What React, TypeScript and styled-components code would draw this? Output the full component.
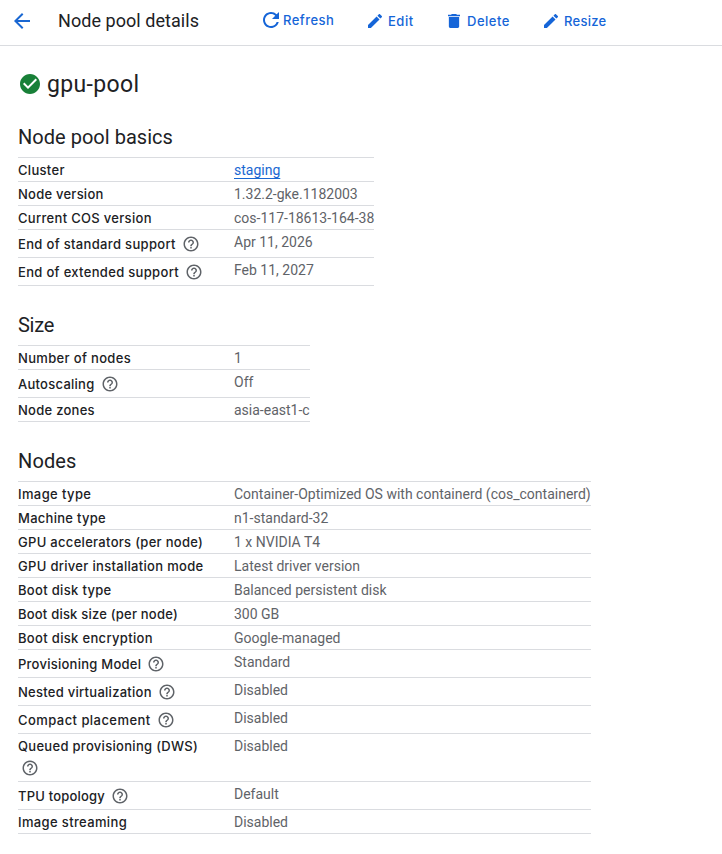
import React from 'react';
import styled, { createGlobalStyle } from 'styled-components';

const GlobalStyle = createGlobalStyle`
  body {
    margin: 0;
    background: #fff;
    color: #202124;
    font-family: Roboto, sans-serif;
  }
`;

const Page = styled.div`
  width: 722px;
  height: 854px;
  overflow: hidden;
  background: #fff;
`;

const Header = styled.header`
  display: flex;
  align-items: center;
  box-sizing: border-box;
  height: 46px;
  padding: 0 0 4px 10px;
  border-bottom: 1px solid #dadce0;
`;

const Icon = styled.svg<{ $w: number; $h?: number }>`
  display: block;
  flex: none;
  width: ${(p) => p.$w}px;
  height: ${(p) => p.$h ?? p.$w}px;
  fill: currentColor;
`;

const BackButton = styled.a`
  display: flex;
  margin-right: 24px;
  color: #1967d2;
`;

const Title = styled.h1`
  flex: none;
  width: 201px;
  margin: 0;
  font-size: 18px;
  font-weight: 400;
  line-height: 24px;
  letter-spacing: 0.05px;
  white-space: nowrap;
`;

const Action = styled.a<{ $width: number; $gap: number; $spacing: number; $raise?: boolean }>`
  display: flex;
  flex: none;
  align-items: center;
  gap: ${(p) => p.$gap}px;
  width: ${(p) => p.$width}px;
  padding-bottom: ${(p) => (p.$raise ? 2 : 0)}px;
  color: #1565d8;
  font: 500 13px/20px Inter, sans-serif;
  letter-spacing: ${(p) => p.$spacing}px;
`;

const ActionText = styled.span`
  padding-top: 1px;
`;

const Content = styled.main`
  padding: 24px 18px 0;
`;

const PoolName = styled.h2`
  display: flex;
  align-items: center;
  gap: 5px;
  height: 28px;
  margin: 0 0 28px;
  color: #188038;
`;

const PoolText = styled.span`
  padding-top: 1px;
  color: #202124;
  font-size: 23px;
  font-weight: 400;
  line-height: 28px;
  letter-spacing: 0.35px;
`;

const Section = styled.section`
  margin-bottom: 28px;
`;

const SectionTitle = styled.h3<{ $spacing: number }>`
  height: 31px;
  margin: 0;
  font-size: 20px;
  font-weight: 400;
  line-height: 22px;
  letter-spacing: ${(p) => p.$spacing}px;
`;

const Table = styled.dl<{ $width: number }>`
  width: ${(p) => p.$width}px;
  margin: 0;
  border-top: 1px solid #dadce0;
`;

const Row = styled.div<{ $height: number }>`
  display: grid;
  grid-template-columns: 190px 1fr;
  column-gap: 26px;
  box-sizing: border-box;
  height: ${(p) => p.$height}px;
  border-bottom: 1px solid #dadce0;
`;

const Label = styled.dt<{ $help?: boolean; $wrapped?: boolean }>`
  display: flex;
  flex-direction: ${(p) => (p.$wrapped ? 'column' : 'row')};
  align-items: ${(p) => (p.$wrapped ? 'flex-start' : 'center')};
  align-self: start;
  row-gap: 1px;
  column-gap: 3px;
  padding-top: ${(p) => (p.$help && !p.$wrapped ? 3 : 2)}px;
`;

const LabelText = styled.span<{ $spacing: number }>`
  font: 500 13px/20px Inter, sans-serif;
  letter-spacing: ${(p) => p.$spacing + 0.04}px;
  white-space: nowrap;
`;

const Help = styled.span`
  display: flex;
  flex: none;
  align-items: center;
  height: 22px;
  margin-left: 3px;
  color: #5f6368;
`;

const Value = styled.dd`
  margin: 0;
  padding-top: 2px;
  color: #5f6368;
  font-size: 14px;
  line-height: 20px;
  white-space: nowrap;
`;

const Link = styled.a`
  color: #1967d2;
  text-decoration: underline;
  text-underline-offset: 3px;
  text-decoration-skip-ink: none;
`;

const PENCIL =
  'M3 17.25V21h3.75L17.81 9.94l-3.75-3.75L3 17.25zM20.71 7.04a1 1 0 0 0 0-1.41l-2.34-2.34a1 1 0 0 0-1.41 0l-1.83 1.83 3.75 3.75 1.83-1.83z';

const HelpIcon = () => (
  <Icon $w={18} viewBox="0 0 24 24">
    <path d="M11 18h2v-2h-2v2zm1-16C6.48 2 2 6.48 2 12s4.48 10 10 10 10-4.48 10-10S17.52 2 12 2zm0 18c-4.41 0-8-3.59-8-8s3.59-8 8-8 8 3.59 8 8-3.59 8-8 8zm0-14c-2.21 0-4 1.79-4 4h2c0-1.1.9-2 2-2s2 .9 2 2c0 2-3 1.75-3 5h2c0-2.25 3-2.5 3-5 0-2.21-1.79-4-4-4z" />
  </Icon>
);

type Item = {
  label: string;
  value: string;
  spacing: number;
  help?: boolean;
  wrapped?: boolean;
  link?: boolean;
};

type Group = { title: string; spacing: number; width: number; items: Item[] };

const groups: Group[] = [
  {
    title: 'Node pool basics',
    spacing: 0.03,
    width: 356,
    items: [
      { label: 'Cluster', value: 'staging', spacing: 0.27, link: true },
      { label: 'Node version', value: '1.32.2-gke.1182003', spacing: 0.2 },
      { label: 'Current COS version', value: 'cos-117-18613-164-38', spacing: 0.27 },
      { label: 'End of standard support', value: 'Apr 11, 2026', spacing: 0.29, help: true },
      { label: 'End of extended support', value: 'Feb 11, 2027', spacing: 0.28, help: true },
    ],
  },
  {
    title: 'Size',
    spacing: -0.28,
    width: 292,
    items: [
      { label: 'Number of nodes', value: '1', spacing: 0.3 },
      { label: 'Autoscaling', value: 'Off', spacing: 0.22, help: true },
      { label: 'Node zones', value: 'asia-east1-c', spacing: 0.23 },
    ],
  },
  {
    title: 'Nodes',
    spacing: 0.12,
    width: 573,
    items: [
      { label: 'Image type', value: 'Container-Optimized OS with containerd (cos_containerd)', spacing: 0.35 },
      { label: 'Machine type', value: 'n1-standard-32', spacing: 0.24 },
      { label: 'GPU accelerators (per node)', value: '1 x NVIDIA T4', spacing: 0.26 },
      { label: 'GPU driver installation mode', value: 'Latest driver version', spacing: 0.27 },
      { label: 'Boot disk type', value: 'Balanced persistent disk', spacing: 0.28 },
      { label: 'Boot disk size (per node)', value: '300 GB', spacing: 0.17 },
      { label: 'Boot disk encryption', value: 'Google-managed', spacing: 0.29 },
      { label: 'Provisioning Model', value: 'Standard', spacing: 0.21, help: true },
      { label: 'Nested virtualization', value: 'Disabled', spacing: 0.23, help: true },
      { label: 'Compact placement', value: 'Disabled', spacing: 0.4, help: true },
      { label: 'Queued provisioning (DWS)', value: 'Disabled', spacing: 0.26, help: true, wrapped: true },
      { label: 'TPU topology', value: 'Default', spacing: 0.15, help: true },
      { label: 'Image streaming', value: 'Disabled', spacing: 0.32 },
    ],
  },
];

const rowHeight = (item: Item) => (item.wrapped ? 48 : item.help ? 28 : 24);

export default function App() {
  return (
    <Page>
      <GlobalStyle />
      <Header>
        <BackButton aria-label="Back">
          <Icon $w={24} viewBox="0 0 24 24">
            <path d="M20 11H7.83l5.59-5.59L12 4l-8 8 8 8 1.41-1.41L7.83 13H20v-2z" />
          </Icon>
        </BackButton>
        <Title>Node pool details</Title>
        <Action $width={109} $gap={0} $spacing={0.45} $raise>
          <Icon $w={24} viewBox="0 0 24 24">
            <path d="M17.65 6.35A7.958 7.958 0 0 0 12 4c-4.42 0-7.99 3.58-7.99 8s3.57 8 7.99 8c3.73 0 6.84-2.55 7.73-6h-2.08A5.99 5.99 0 0 1 12 18c-3.31 0-6-2.69-6-6s2.69-6 6-6c1.66 0 3.14.69 4.22 1.78L13 11h7V4l-2.35 2.35z" />
          </Icon>
          <ActionText>Refresh</ActionText>
        </Action>
        <Action $width={80} $gap={6} $spacing={0.5}>
          <Icon $w={14} viewBox="3 3 18 18">
            <path d={PENCIL} />
          </Icon>
          <ActionText>Edit</ActionText>
        </Action>
        <Action $width={96} $gap={7} $spacing={0.5}>
          <Icon $w={12} $h={14} viewBox="5 3 14 18" preserveAspectRatio="none">
            <path d="M6 19c0 1.1.9 2 2 2h8c1.1 0 2-.9 2-2V7H6v12zM19 4h-3.5l-1-1h-5l-1 1H5v2h14V4z" />
          </Icon>
          <ActionText>Delete</ActionText>
        </Action>
        <Action $width={80} $gap={6} $spacing={0.25}>
          <Icon $w={14} viewBox="3 3 18 18">
            <path d={PENCIL} />
          </Icon>
          <ActionText>Resize</ActionText>
        </Action>
      </Header>
      <Content>
        <PoolName>
          <Icon $w={24} viewBox="0 0 24 24">
            <path d="M12 2C6.48 2 2 6.48 2 12s4.48 10 10 10 10-4.48 10-10S17.52 2 12 2zm-2 15-5-5 1.41-1.41L10 14.17l7.59-7.59L19 8l-9 9z" />
          </Icon>
          <PoolText>gpu-pool</PoolText>
        </PoolName>
        {groups.map((group) => (
          <Section key={group.title}>
            <SectionTitle $spacing={group.spacing}>{group.title}</SectionTitle>
            <Table $width={group.width}>
              {group.items.map((item) => (
                <Row key={item.label} $height={rowHeight(item)}>
                  <Label $help={item.help} $wrapped={item.wrapped}>
                    <LabelText $spacing={item.spacing}>{item.label}</LabelText>
                    {item.help && (
                      <Help>
                        <HelpIcon />
                      </Help>
                    )}
                  </Label>
                  <Value>{item.link ? <Link>{item.value}</Link> : item.value}</Value>
                </Row>
              ))}
            </Table>
          </Section>
        ))}
      </Content>
    </Page>
  );
}
